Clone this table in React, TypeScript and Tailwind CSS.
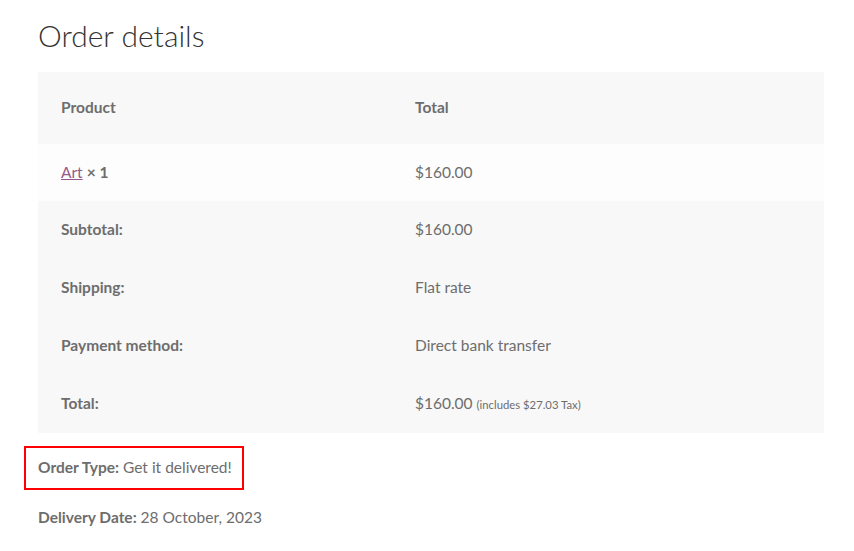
import React from "react";

const rows = [
    { label: "Subtotal:", value: "$160.00" },
    { label: "Shipping:", value: "Flat rate" },
    { label: "Payment method:", value: "Direct bank transfer" },
];

const App = () => {
    return (
        <div className="w-[854px] h-[551px] bg-white overflow-hidden font-['Lato',sans-serif] text-[#6d6d6d] text-[15.5px]">
            <div className="pl-[38px] pr-[30px] pt-[15px]">
                <h2 className="text-[30px] font-light text-[#333333] leading-[40px] h-[57px]">
                    Order details
                </h2>
                <div className="w-[786px] flex flex-col">
                    <div className="grid grid-cols-[355px_1fr] h-[72px] items-center bg-[#f8f8f8] font-bold pb-[1px]">
                        <span className="pl-[23px]">Product</span>
                        <span className="pl-[22px]">Total</span>
                    </div>
                    <div className="grid grid-cols-[355px_1fr] h-[57px] items-center bg-[#fdfdfd]">
                        <span className="pl-[23px]">
                            <a href="#" className="text-[#96588a] underline">Art</a>{" "}
                            <strong className="font-bold">× 1</strong>
                        </span>
                        <span className="pl-[22px]">$160.00</span>
                    </div>
                    <div className="bg-[#f8f8f8] flex flex-col">
                        {rows.map((r) => (
                            <div key={r.label} className="grid grid-cols-[355px_1fr] h-[58px] items-center pb-[1px]">
                                <span className="pl-[23px] font-bold">{r.label}</span>
                                <span className="pl-[22px]">{r.value}</span>
                            </div>
                        ))}
                        <div className="grid grid-cols-[355px_1fr] h-[58px] items-center pb-[1px]">
                            <span className="pl-[23px] font-bold">Total:</span>
                            <span className="pl-[22px]">
                                $160.00 <small className="text-[11.3px]">(includes $27.03 Tax)</small>
                            </span>
                        </div>
                    </div>
                </div>
                <div className="mt-[13px] -ml-[14px] w-[220px] h-[44px] border-2 border-[#ff0000] flex items-center pl-[12px]">
                    <p>
                        <strong className="font-bold">Order Type:</strong> Get it delivered!
                    </p>
                </div>
                <p className="mt-[15px] leading-[24px]">
                    <strong className="font-bold">Delivery Date:</strong> 28 October, 2023
                </p>
            </div>
        </div>
    );
};

export default App;
